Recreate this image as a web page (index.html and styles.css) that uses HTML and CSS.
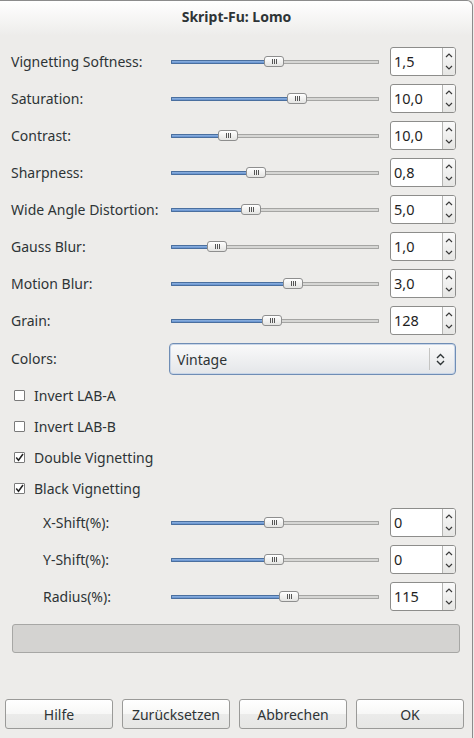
FILE: index.html
```html
<!DOCTYPE html>
<html>
<head>
<meta charset="utf-8">
<link rel="stylesheet" href="styles.css">
</head>
<body>
<div class="window">
  <div class="titlebar">Skript-Fu: Lomo</div>
  <div class="content">
    <div class="rows">
      <div class="row"><span class="label">Vignetting Softness:</span><div class="slider"><div class="fill" style="width:103px"><span class="thumb"><i></i><i></i><i></i></span></div><div class="rest"></div></div><div class="spin"><span class="val">1,5</span><span class="btns"><svg width="8" height="5" viewBox="0 0 8 5"><path d="M1 4 L4 1 L7 4" fill="none" stroke="#3a3a3a" stroke-width="1.2"/></svg><svg width="8" height="5" viewBox="0 0 8 5"><path d="M1 1 L4 4 L7 1" fill="none" stroke="#3a3a3a" stroke-width="1.2"/></svg></span></div></div>
      <div class="row"><span class="label">Saturation:</span><div class="slider"><div class="fill" style="width:126px"><span class="thumb"><i></i><i></i><i></i></span></div><div class="rest"></div></div><div class="spin"><span class="val">10,0</span><span class="btns"><svg width="8" height="5" viewBox="0 0 8 5"><path d="M1 4 L4 1 L7 4" fill="none" stroke="#3a3a3a" stroke-width="1.2"/></svg><svg width="8" height="5" viewBox="0 0 8 5"><path d="M1 1 L4 4 L7 1" fill="none" stroke="#3a3a3a" stroke-width="1.2"/></svg></span></div></div>
      <div class="row"><span class="label">Contrast:</span><div class="slider"><div class="fill" style="width:57px"><span class="thumb"><i></i><i></i><i></i></span></div><div class="rest"></div></div><div class="spin"><span class="val">10,0</span><span class="btns"><svg width="8" height="5" viewBox="0 0 8 5"><path d="M1 4 L4 1 L7 4" fill="none" stroke="#3a3a3a" stroke-width="1.2"/></svg><svg width="8" height="5" viewBox="0 0 8 5"><path d="M1 1 L4 4 L7 1" fill="none" stroke="#3a3a3a" stroke-width="1.2"/></svg></span></div></div>
      <div class="row"><span class="label">Sharpness:</span><div class="slider"><div class="fill" style="width:85px"><span class="thumb"><i></i><i></i><i></i></span></div><div class="rest"></div></div><div class="spin"><span class="val">0,8</span><span class="btns"><svg width="8" height="5" viewBox="0 0 8 5"><path d="M1 4 L4 1 L7 4" fill="none" stroke="#3a3a3a" stroke-width="1.2"/></svg><svg width="8" height="5" viewBox="0 0 8 5"><path d="M1 1 L4 4 L7 1" fill="none" stroke="#3a3a3a" stroke-width="1.2"/></svg></span></div></div>
      <div class="row"><span class="label">Wide Angle Distortion:</span><div class="slider"><div class="fill" style="width:80px"><span class="thumb"><i></i><i></i><i></i></span></div><div class="rest"></div></div><div class="spin"><span class="val">5,0</span><span class="btns"><svg width="8" height="5" viewBox="0 0 8 5"><path d="M1 4 L4 1 L7 4" fill="none" stroke="#3a3a3a" stroke-width="1.2"/></svg><svg width="8" height="5" viewBox="0 0 8 5"><path d="M1 1 L4 4 L7 1" fill="none" stroke="#3a3a3a" stroke-width="1.2"/></svg></span></div></div>
      <div class="row"><span class="label">Gauss Blur:</span><div class="slider"><div class="fill" style="width:46px"><span class="thumb"><i></i><i></i><i></i></span></div><div class="rest"></div></div><div class="spin"><span class="val">1,0</span><span class="btns"><svg width="8" height="5" viewBox="0 0 8 5"><path d="M1 4 L4 1 L7 4" fill="none" stroke="#3a3a3a" stroke-width="1.2"/></svg><svg width="8" height="5" viewBox="0 0 8 5"><path d="M1 1 L4 4 L7 1" fill="none" stroke="#3a3a3a" stroke-width="1.2"/></svg></span></div></div>
      <div class="row"><span class="label">Motion Blur:</span><div class="slider"><div class="fill" style="width:122px"><span class="thumb"><i></i><i></i><i></i></span></div><div class="rest"></div></div><div class="spin"><span class="val">3,0</span><span class="btns"><svg width="8" height="5" viewBox="0 0 8 5"><path d="M1 4 L4 1 L7 4" fill="none" stroke="#3a3a3a" stroke-width="1.2"/></svg><svg width="8" height="5" viewBox="0 0 8 5"><path d="M1 1 L4 4 L7 1" fill="none" stroke="#3a3a3a" stroke-width="1.2"/></svg></span></div></div>
      <div class="row"><span class="label">Grain:</span><div class="slider"><div class="fill" style="width:101px"><span class="thumb"><i></i><i></i><i></i></span></div><div class="rest"></div></div><div class="spin"><span class="val">128</span><span class="btns"><svg width="8" height="5" viewBox="0 0 8 5"><path d="M1 4 L4 1 L7 4" fill="none" stroke="#3a3a3a" stroke-width="1.2"/></svg><svg width="8" height="5" viewBox="0 0 8 5"><path d="M1 1 L4 4 L7 1" fill="none" stroke="#3a3a3a" stroke-width="1.2"/></svg></span></div></div>
    </div>

    <div class="combo-row">
      <span class="label">Colors:</span>
      <div class="combo"><span class="combo-text">Vintage</span><span class="combo-sep"></span><svg class="combo-arrow" width="9" height="13" viewBox="0 0 9 13"><path d="M1 5 L4.5 1.5 L8 5 M1 8 L4.5 11.5 L8 8" fill="none" stroke="#2e3436" stroke-width="1.4"/></svg></div>
    </div>

    <div class="checks">
      <label class="check"><span class="box"></span>Invert LAB-A</label>
      <label class="check"><span class="box"></span>Invert LAB-B</label>
      <label class="check"><span class="box on"><svg width="9" height="9" viewBox="0 0 9 9"><path d="M1.2 4.6 L3.5 7.2 L8 1" fill="none" stroke="#222" stroke-width="1.5"/></svg></span>Double Vignetting</label>
      <label class="check"><span class="box on"><svg width="9" height="9" viewBox="0 0 9 9"><path d="M1.2 4.6 L3.5 7.2 L8 1" fill="none" stroke="#222" stroke-width="1.5"/></svg></span>Black Vignetting</label>
    </div>

    <div class="rows sub">
      <div class="row"><span class="label">X-Shift(%):</span><div class="slider"><div class="fill" style="width:103px"><span class="thumb"><i></i><i></i><i></i></span></div><div class="rest"></div></div><div class="spin"><span class="val">0</span><span class="btns"><svg width="8" height="5" viewBox="0 0 8 5"><path d="M1 4 L4 1 L7 4" fill="none" stroke="#3a3a3a" stroke-width="1.2"/></svg><svg width="8" height="5" viewBox="0 0 8 5"><path d="M1 1 L4 4 L7 1" fill="none" stroke="#3a3a3a" stroke-width="1.2"/></svg></span></div></div>
      <div class="row"><span class="label">Y-Shift(%):</span><div class="slider"><div class="fill" style="width:103px"><span class="thumb"><i></i><i></i><i></i></span></div><div class="rest"></div></div><div class="spin"><span class="val">0</span><span class="btns"><svg width="8" height="5" viewBox="0 0 8 5"><path d="M1 4 L4 1 L7 4" fill="none" stroke="#3a3a3a" stroke-width="1.2"/></svg><svg width="8" height="5" viewBox="0 0 8 5"><path d="M1 1 L4 4 L7 1" fill="none" stroke="#3a3a3a" stroke-width="1.2"/></svg></span></div></div>
      <div class="row"><span class="label">Radius(%):</span><div class="slider"><div class="fill" style="width:118px"><span class="thumb"><i></i><i></i><i></i></span></div><div class="rest"></div></div><div class="spin"><span class="val">115</span><span class="btns"><svg width="8" height="5" viewBox="0 0 8 5"><path d="M1 4 L4 1 L7 4" fill="none" stroke="#3a3a3a" stroke-width="1.2"/></svg><svg width="8" height="5" viewBox="0 0 8 5"><path d="M1 1 L4 4 L7 1" fill="none" stroke="#3a3a3a" stroke-width="1.2"/></svg></span></div></div>
    </div>

    <div class="progress"></div>
  </div>
  <div class="buttons">
    <button class="btn">Hilfe</button>
    <button class="btn">Zurücksetzen</button>
    <button class="btn">Abbrechen</button>
    <button class="btn">OK</button>
  </div>
</div>
</body>
</html>
```
FILE: styles.css
```css
html, body {
  margin: 0;
  padding: 0;
  background: #edecea;
}
body {
  width: 474px;
  height: 738px;
  overflow: hidden;
  font-family: "Noto Sans", "DejaVu Sans", sans-serif;
  font-size: 14px;
  color: #2e3436;
}
.window {
  width: 473px;
  height: 738px;
  box-sizing: border-box;
  border-top: 1px solid #8c8c8c;
  border-right: 1px solid #8c8c8c;
  border-top-right-radius: 6px;
  background: #edecea;
  display: flex;
  flex-direction: column;
}
.titlebar {
  height: 35px;
  flex: none;
  background: linear-gradient(#ffffff, #edecea);
  border-top-right-radius: 6px;
  font-weight: bold;
  text-align: center;
  line-height: 31px;
  padding-left: 1px;
}
.content {
  padding: 11px 16px 0 11px;
  display: flex;
  flex-direction: column;
}
.rows {
  display: flex;
  flex-direction: column;
  gap: 8px;
}
.row {
  display: flex;
  align-items: center;
  height: 29px;
}
.label {
  width: 160px;
  flex: none;
  line-height: 16px;
}
.sub {
  margin-top: 4px;
}
.sub .label {
  padding-left: 32px;
  box-sizing: border-box;
}
.slider {
  width: 208px;
  flex: none;
  display: flex;
  height: 4px;
  margin-right: 11px;
}
.fill {
  position: relative;
  height: 4px;
  box-sizing: border-box;
  border: 1px solid #4a6f9f;
  border-right: none;
  background: linear-gradient(#8fb3e0, #6591cf);
  border-radius: 1px 0 0 1px;
}
.rest {
  flex: 1;
  height: 4px;
  box-sizing: border-box;
  border: 1px solid #a5a5a3;
  border-left: none;
  background: #d6d6d4;
  border-radius: 0 1px 1px 0;
}
.thumb {
  position: absolute;
  right: -10px;
  top: -4.5px;
  width: 20px;
  height: 11px;
  box-sizing: border-box;
  border: 1px solid #8e8e8e;
  border-radius: 3px;
  background: linear-gradient(#ffffff, #e4e4e2);
  display: flex;
  justify-content: center;
  align-items: center;
  gap: 1px;
}
.thumb i {
  display: block;
  width: 1px;
  height: 5px;
  background: #555;
}
.spin {
  width: 66px;
  height: 29px;
  flex: none;
  box-sizing: border-box;
  border: 1px solid #8d8d8b;
  border-radius: 3px;
  background: #fff;
  display: flex;
  overflow: hidden;
}
.val {
  flex: 1;
  padding-left: 3px;
  line-height: 27px;
  font-size: 14.5px;
  color: #1e1e1e;
}
.btns {
  width: 12px;
  flex: none;
  border-left: 1px solid #b4b4b2;
  background: linear-gradient(#fafafa, #e6e6e4);
  display: flex;
  flex-direction: column;
  justify-content: space-around;
  align-items: center;
  padding: 2px 0;
}
.btns svg { display: block; }
.combo-row {
  display: flex;
  align-items: center;
  margin-top: 8px;
  height: 32px;
}
.combo-row .label { width: 158px; }
.combo {
  width: 289px;
  height: 32px;
  box-sizing: border-box;
  border: 1px solid #6f8db5;
  border-radius: 4px;
  background: linear-gradient(#fafafa, #e4e6e9);
  display: flex;
  align-items: center;
  box-shadow: inset 0 0 0 1px #c9d6e8;
}
.combo-text {
  flex: 1;
  padding-left: 7px;
}
.combo-sep {
  width: 1px;
  height: 22px;
  background: #c4c4c2;
  margin-right: 6px;
}
.combo-arrow {
  margin-right: 10px;
  display: block;
}
.checks {
  display: flex;
  flex-direction: column;
  margin-top: 5px;
}
.check {
  display: flex;
  align-items: center;
  height: 31px;
  padding-left: 3px;
}
.box {
  width: 11px;
  height: 11px;
  box-sizing: border-box;
  border: 1px solid #7a7a7a;
  border-radius: 1px;
  background: #fff;
  margin-right: 9px;
  display: flex;
  align-items: center;
  justify-content: center;
}
.box svg { display: block; }
.progress {
  margin-top: 13px;
  height: 29px;
  width: 448px;
  box-sizing: border-box;
  border: 1px solid #a7a7a5;
  border-radius: 3px;
  background: #d4d3d1;
  margin-left: 1px;
}
.buttons {
  margin-top: auto;
  margin-bottom: 9px;
  padding-left: 5px;
  display: flex;
  gap: 9px;
}
.btn {
  width: 108px;
  height: 30px;
  box-sizing: border-box;
  border: 1px solid #9a9a98;
  border-radius: 3px;
  background: linear-gradient(#ffffff 0%, #f7f7f6 50%, #ebebea 51%, #e6e6e4 100%);
  font-family: "Noto Sans", "DejaVu Sans", sans-serif;
  font-size: 14px;
  color: #2e3436;
  padding: 0;
}
```
